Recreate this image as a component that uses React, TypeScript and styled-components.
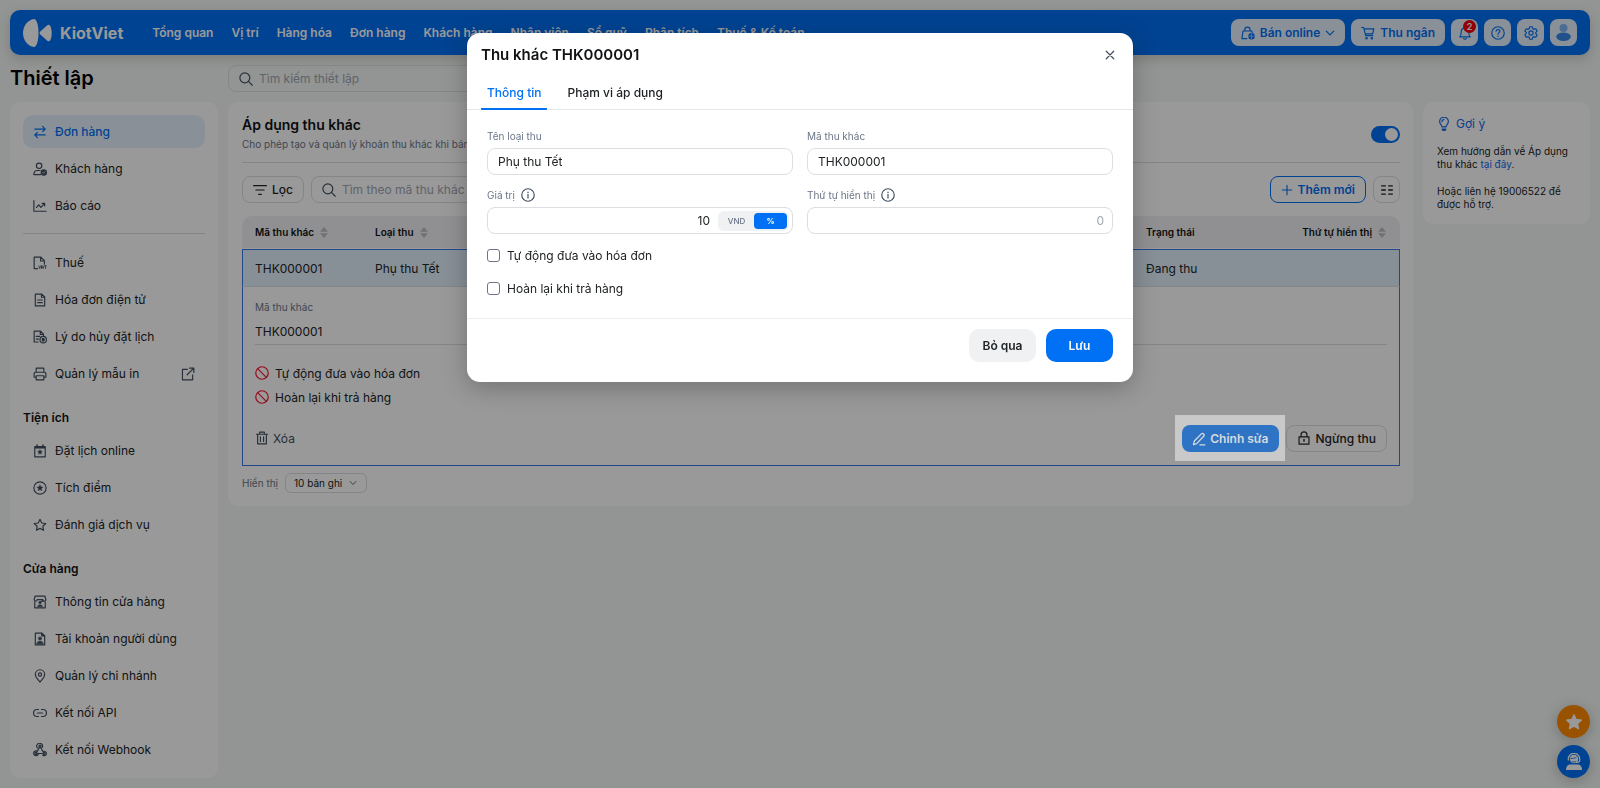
import React, { ReactNode, useState } from "react";
import styled, { createGlobalStyle, css } from "styled-components";

const c = {
  blue: "#0070f4",
  blueSoft: "#e6f1fe",
  ink: "#202325",
  icon: "#42505f",
  muted: "#6c7688",
  hint: "#a0a6b1",
  line: "#dcdee2",
  card: "#ffffff",
  page: "#f4f8f5",
};

const Global = createGlobalStyle`
  *, *::before, *::after { box-sizing: border-box; }
  body { margin: 0; background: ${c.page}; }
  body, button, input, select { font-family: Inter, "Liberation Sans", sans-serif; font-size: 12px; color: ${c.ink}; }
  a { color: inherit; text-decoration: none; }
  button { cursor: pointer; }
  h1, h2, h3, p { margin: 0; }
  svg { display: block; flex: none; }
`;

/* ---------- icons ---------- */

const Svg = ({ size = 14, w = 2, children }: { size?: number; w?: number; children: ReactNode }) => (
  <svg width={size} height={size} viewBox="0 0 24 24" fill="none" stroke="currentColor" strokeWidth={w} strokeLinecap="round" strokeLinejoin="round" aria-hidden="true">
    {children}
  </svg>
);

const star = "M12 2.2l3 6.3 6.9.9-5 4.8 1.2 6.9L12 17.8l-6.1 3.3 1.2-6.9-5-4.8 6.9-.9z";

const icons: Record<string, ReactNode> = {
  swap: <><path d="M3 7h18M16.500 2.500L21 7l-4.500 4.500M21 17H3M7.500 12.500L3 17l4.500 4.500" /></>,
  customer: <><circle cx="10.500" cy="6.500" r="4.700" /><path d="M13 21.500H1.500c0-4.500 2.500-7 6-7h4.500" /><circle cx="18.500" cy="18" r="4.500" fill="currentColor" /><path d="M16.500 18l1.500 1.500 2.500-3" stroke="#fff" strokeWidth="1.200" /></>,
  report: <><path d="M1.500 2.500v18.500h21" /><path d="M6 14.500l4-4.500 3.500 4.500 6.500-7M15.500 7.500H20V12" /></>,
  tax: <><path d="M8 21.500H2V2h11.500l6 6v6M13 2v6.500h6.500" /><path d="M10 17l1.500 4.500L13 17M14.500 21.500v-4.500h3v4.500M14.500 19.500h3M19.500 17H23M21.300 17v4.500" strokeWidth="1.400" /></>,
  invoice: <><path d="M4 1.800h11l5 5v15.400H4zM14.500 1.800v5.500H20M8 12h8M8 16.500h8" /></>,
  cancelDoc: <><path d="M9 20.500H2V2h11l5 5v3M12.500 2v5.500H18M5.500 11h6M5.500 15.500h4" /><circle cx="17.500" cy="16.500" r="5.500" /><path d="M16 14.500h3v4h-3z" fill="currentColor" /></>,
  print: <><path d="M5.500 9V2h13v7M5.500 17.500H2V11c0-1 .8-2 2-2h16c1.200 0 2 1 2 2v6.500h-3.500M5.500 15h13v7h-13z" /></>,
  external: <><path d="M11 4H2.500v18H20v-8.500M14.500 1.800H22V9.300M22 1.800L10.500 13.300" /></>,
  calendar: <><path d="M3 4.500h18V22H3zM3 6.500h18" /><path d="M7 1.500V6M17 1.500V6" strokeWidth="2.500" /><path d="M12 9.500l1.300 2.700 3 .4-2.200 2.100.5 3-2.600-1.400-2.600 1.400.5-3-2.200-2.100 3-.4z" fill="currentColor" strokeWidth=".5" /></>,
  points: <><circle cx="12" cy="12" r="10.500" /><path d="M12 6.500l1.700 3.400 3.800.5-2.800 2.600.7 3.700L12 14.900l-3.400 1.800.7-3.700-2.800-2.600 3.800-.5z" fill="currentColor" strokeWidth=".5" /></>,
  star: <path d={star} />,
  shop: <><path d="M3 10v12h18V10M2 8l1.500-6h17L22 8c0 1.500-1 2.500-2.500 2.500S17 9.500 17 8c0 1.500-1 2.500-2.500 2.500M7 8c0 1.500-1 2.500-2.500 2.500S2 9.500 2 8M7 8h10" /><circle cx="12" cy="13" r="2.300" fill="currentColor" strokeWidth=".5" /><path d="M7.500 20c.3-2.300 2-3.300 4.500-3.300s4.200 1 4.500 3.300z" fill="currentColor" strokeWidth=".5" /></>,
  account: <><path d="M4 1.800h11l5 5v15.400H4z" /><path d="M15 1.800v5h5z" fill="currentColor" /><circle cx="12" cy="11" r="2.600" fill="currentColor" strokeWidth="1" /><path d="M6.500 20c.5-3 2.500-4.300 5.500-4.300s5 1.300 5.500 4.300z" fill="currentColor" strokeWidth="1" /></>,
  pin: <><path d="M12 22.700C7.500 17 4 13.500 4 9.300a8 8 0 0116 0c0 4.200-3.500 7.700-8 13.400z" /><circle cx="12" cy="9.300" r="2.800" /></>,
  link: <><path d="M9.500 6H7a6 6 0 000 12h2.500M14.500 6h2.500a6 6 0 010 12h-2.500M7.500 12h9" /></>,
  webhook: <><circle cx="12" cy="5.500" r="1.800" /><circle cx="5" cy="18" r="1.800" /><circle cx="19" cy="18" r="1.800" /><path d="M7.500 8.500a5 5 0 118.500-1M11 7.500L6.500 16M13 7.500l4 7c3.500-1.200 6 1 6 3.500 0 3-3.500 5-6.500 3M7 18h10M6.500 13.500C3 13 1 15.500 1 18c0 4 6.500 5.500 8.500 1" /></>,
  search: <><circle cx="10" cy="10" r="8.500" /><path d="M16.200 16.200l6.500 6.500" /></>,
  filter: <path d="M1 4.500h22M5 12h14M9.800 19.500h4.400" />,
  info: <><circle cx="12" cy="12" r="10.700" /><path d="M12 11v6" /><path d="M12 7.200v.3" strokeWidth="2.300" /></>,
  ban: <><circle cx="12" cy="12" r="10.700" /><path d="M4.600 4.600l14.800 14.800" /></>,
  trash: <><path d="M2.500 5.500h19M8 5.500V2h8v3.500M4.500 5.500V22h15V5.500M9.300 10v8M14.700 10v8" /></>,
  edit: <><path d="M2.500 21.500l1.500-6L16 3.200c2.500-2.400 6.300 1.500 4 4L8 20zM13.500 22H22" /></>,
  lock: <><path d="M3.500 10h17v12.500h-17zM7 10V6.500a5 5 0 0110 0V10" /><path d="M12 14.500v3" strokeWidth="2.400" /></>,
  plus: <path d="M12 2.500v19M2.500 12h19" />,
  columns: <path d="M2 5h8M14 5h8M2 12h8M14 12h8M2 19h8M14 19h8" strokeLinecap="butt" />,
  chevron: <path d="M3 7.500l9 9 9-9" />,
  close: <path d="M3 3l18 18M21 3L3 21" />,
  bag: <><path d="M10 21.500H1.500L3.500 8.500h15l.7 3M6.500 8V6.500a4.500 4.500 0 019 0V8" /><circle cx="18" cy="17.500" r="5.500" fill="currentColor" stroke="none" /><path d="M13.500 17.500h9M18 13v9" stroke="#e6f1fe" strokeWidth="1" /></>,
  cart: <><path d="M1 2.500h3.500L8 16.500h12M5 5h17l-2 8.500H7.500" /><circle cx="9.500" cy="21" r="1.300" /><circle cx="18.500" cy="21" r="1.300" /></>,
  bell: <><path d="M3 18.500h18c-2-2-2.500-4-2.500-8.500 0-4-3-6.500-6.500-6.500S5.500 6 5.500 10c0 4.500-.5 6.500-2.500 8.500zM12 3.500v-2M9.500 21.700c1.200 1.200 3.800 1.200 5 0" /></>,
  help: <><circle cx="12" cy="12" r="10.700" /><path d="M8.700 9c.2-1.800 1.500-2.800 3.300-2.800s3.400 1 3.400 2.800c0 2.500-3.400 2.300-3.400 5" /><path d="M12 17.300v.2" strokeWidth="2.400" /></>,
  gear: <><path d="M9.700 1.300h4.600l.7 3.200 2 1.200 3.200-1 2.300 4-2.300 2.300v2l2.300 2.300-2.300 4-3.200-1-2 1.200-.7 3.200H9.700l-.7-3.200-2-1.200-3.200 1-2.300-4L3.800 13v-2L1.500 8.700l2.300-4 3.200 1 2-1.200z" /><circle cx="12" cy="12" r="3.600" /></>,
  bulb: <><path d="M8.500 17c0-3.500-4-4.500-4-9.200a7.500 7.500 0 0115 0c0 4.700-4 5.700-4 9.200zM8.500 8c0-2 1.300-3.500 3.500-3.500" /><path d="M9 20.500h6v1.500l-3 1-3-1z" fill="currentColor" /></>,
};

const Icon = ({ name, size, w }: { name: string; size?: number; w?: number }) => (
  <Svg size={size} w={w}>{icons[name]}</Svg>
);

/* ---------- page shell ---------- */

const Page = styled.div`
  display: flex;
  flex-direction: column;
  gap: 10px;
  padding: 10px;
`;

const TopBar = styled.header`
  display: flex;
  align-items: center;
  height: 45px;
  padding: 0 13px;
  border-radius: 10px;
  background: ${c.blue};
  color: #fff;
  box-shadow: 0 4px 12px rgba(0, 0, 0, 0.16);
`;

const Brand = styled.a`
  display: flex;
  align-items: center;
  gap: 8px;
  margin-right: 20px;
  font-size: 16px;
  font-weight: 700;
`;

const Nav = styled.nav`
  display: flex;
  flex: 1;
`;

const NavLink = styled.a`
  padding: 0 9px;
  font-weight: 600;
  line-height: 20px;
  white-space: nowrap;
`;

const TopActions = styled.div`
  display: flex;
  gap: 6px;
`;

const TopButton = styled.button<{ $square?: boolean }>`
  position: relative;
  display: flex;
  align-items: center;
  justify-content: center;
  gap: 5px;
  height: 27px;
  padding: ${(p) => (p.$square ? "0" : "0 10px")};
  width: ${(p) => (p.$square ? "27px" : "auto")};
  border: 0;
  border-radius: 8px;
  background: ${c.blueSoft};
  color: ${c.blue};
  font-weight: 600;
`;

const Badge = styled.span`
  position: absolute;
  top: 1px;
  right: 2px;
  width: 13px;
  height: 13px;
  border-radius: 50%;
  background: #f00008;
  color: #fff;
  font-size: 9px;
  line-height: 13px;
  text-align: center;
`;

const TitleRow = styled.div`
  display: grid;
  grid-template-columns: 208px minmax(0, 1fr);
  column-gap: 10px;
  align-items: center;
`;

const PageTitle = styled.h1`
  font-size: 20px;
  line-height: 27px;
  font-weight: 600;
  color: #000;
`;

const SearchField = styled.label<{ $width: number }>`
  display: flex;
  align-items: center;
  gap: 6px;
  width: ${(p) => p.$width}px;
  height: 27px;
  padding: 0 10px;
  border: 1px solid ${c.line};
  border-radius: 8px;
  color: ${c.icon};

  input {
    flex: 1;
    min-width: 0;
    padding: 0;
    border: 0;
    outline: 0;
    background: transparent;
  }
  input::placeholder { color: ${c.hint}; opacity: 1; }
`;

const Columns = styled.div`
  display: grid;
  grid-template-columns: 208px minmax(0, 1fr) 167px;
  gap: 10px;
  align-items: start;
`;

const Card = styled.section`
  border-radius: 10px;
  background: ${c.card};
`;

/* ---------- sidebar ---------- */

const Sidebar = styled(Card).attrs({ as: "aside" })`
  padding: 13px 13px 12px;
`;

const MenuGroup = styled.nav`
  display: flex;
  flex-direction: column;
  gap: 4px;

  & + & {
    margin-top: 11px;
    padding-top: 12px;
    border-top: 1px solid ${c.line};
  }
`;

const MenuTitle = styled.h2`
  margin: 18px 0 6px;
  font-size: 12px;
  line-height: 20px;
  font-weight: 600;
  color: #101214;
`;

const MenuItem = styled.a<{ $active?: boolean }>`
  display: flex;
  align-items: center;
  gap: 8px;
  height: 33px;
  padding: 0 10px;
  border-radius: 10px;
  color: ${c.ink};

  svg { color: ${c.icon}; }
  span { flex: 1; }

  ${(p) => p.$active && css`
    background: ${c.blueSoft};
    color: ${c.blue};
    font-weight: 500;
    svg { color: ${c.blue}; }
  `}
`;

/* ---------- main panel ---------- */

const Main = styled(Card).attrs({ as: "main" })`
  padding: 13px 13px 13px 14px;
`;

const PanelHead = styled.div`
  display: flex;
  align-items: center;
  justify-content: space-between;
  height: 48px;
  padding-bottom: 9px;
  border-bottom: 1px solid ${c.line};
`;

const PanelTitle = styled.h2`
  font-size: 14px;
  line-height: 20px;
  font-weight: 600;
  color: #101214;
`;

const PanelNote = styled.p`
  font-size: 10px;
  line-height: 18px;
  color: ${c.muted};
`;

const Switch = styled.input.attrs({ type: "checkbox" })`
  appearance: none;
  display: flex;
  align-items: center;
  width: 29px;
  height: 17px;
  margin: 0;
  padding: 2px;
  border-radius: 9px;
  background: #b9bec6;

  &::before {
    content: "";
    width: 13px;
    height: 13px;
    border-radius: 50%;
    background: #fff;
  }
  &:checked {
    justify-content: flex-end;
    background: ${c.blue};
  }
`;

const Toolbar = styled.div`
  display: flex;
  gap: 7px;
  margin: 13px 0;
`;

const Spacer = styled.div`
  flex: 1;
`;

const OutlineButton = styled.button<{ $blue?: boolean; $square?: boolean }>`
  display: flex;
  align-items: center;
  justify-content: center;
  gap: 5px;
  width: ${(p) => (p.$square ? "27px" : "auto")};
  height: 27px;
  padding: ${(p) => (p.$square ? "0" : "0 10px")};
  border: 1px solid ${(p) => (p.$blue ? c.blue : c.line)};
  border-radius: 8px;
  background: #fff;
  color: ${(p) => (p.$blue ? c.blue : c.ink)};
  font-weight: ${(p) => (p.$blue ? 600 : 500)};
`;

const Table = styled.table`
  width: 100%;
  border-collapse: separate;
  border-spacing: 0;
  table-layout: fixed;
  text-align: left;

  th {
    height: 33px;
    padding: 0 14px 0 13px;
    background: #f0f1f3;
    border-bottom: 1px solid #fff;
    font-size: 10px;
    font-weight: 600;
    color: #101214;
  }
  th:first-child { border-radius: 10px 0 0 0; }
  th:last-child { border-radius: 0 10px 0 0; }
`;

const SelectedRow = styled.tr`
  td {
    height: 38px;
    padding: 0 12px;
    border-top: 1px solid #3a78e8;
    border-bottom: 1px solid ${c.line};
    background: #e2effc;
  }
  td:first-child { border-left: 1px solid #3a78e8; }
  td:last-child { border-right: 1px solid #3a78e8; }
  td + td { padding-left: 13px; }
`;

const DetailCell = styled.td`
  padding: 11px 12px 4px;
  border: 1px solid #3a78e8;
  border-top: 0;
`;

const Sortable = styled.button<{ $end?: boolean }>`
  display: flex;
  align-items: center;
  justify-content: ${(p) => (p.$end ? "flex-end" : "flex-start")};
  gap: 6px;
  width: 100%;
  padding: 0;
  border: 0;
  background: none;
  font-size: 10px;
  font-weight: 600;
  color: inherit;
  white-space: nowrap;
`;

const ReadLabel = styled.div`
  font-size: 10px;
  line-height: 18px;
  color: ${c.muted};
`;

const ReadValue = styled.div`
  height: 29px;
  margin-bottom: 16px;
  padding-top: 7px;
  line-height: 18px;
  border-bottom: 1px solid ${c.line};
`;

const Flag = styled.div`
  display: flex;
  align-items: center;
  gap: 6px;
  height: 24px;

  svg { color: #ff0a24; }
`;

const DetailActions = styled.div`
  display: flex;
  align-items: center;
  margin-top: 6px;
`;

const TextButton = styled.button`
  display: flex;
  align-items: center;
  gap: 4px;
  padding: 0;
  border: 0;
  background: none;
  color: ${c.icon};
`;

const Spotlight = styled.div`
  position: relative;
  z-index: 6;
  margin-left: auto;
  margin-right: 1px;
  padding: 10px 6px 9px 7px;
  background: #c9c9c9;
`;

const EditButton = styled.button`
  display: flex;
  align-items: center;
  gap: 4px;
  height: 27px;
  padding: 0 10px;
  border: 0;
  border-radius: 8px;
  background: #2f74c4;
  color: #d6dade;
  font-weight: 600;
`;

const Pager = styled.div`
  display: flex;
  align-items: center;
  gap: 7px;
  margin-top: 7px;
  font-size: 10px;
  color: ${c.muted};
`;

const SelectWrap = styled.div`
  display: grid;
  align-items: center;
  height: 20px;
  border: 1px solid ${c.line};
  border-radius: 6px;
  color: ${c.icon};

  > * { grid-area: 1 / 1; }
  svg { justify-self: end; margin-right: 9px; pointer-events: none; }
  select {
    appearance: none;
    height: 18px;
    padding: 0 21px 0 8px;
    border: 0;
    background: none;
    font-size: 10px;
    outline: 0;
  }
`;

/* ---------- tips ---------- */

const Tips = styled(Card).attrs({ as: "aside" })`
  display: flex;
  flex-direction: column;
  gap: 14px;
  padding: 14px 13px 13px 14px;

  h2 {
    display: flex;
    align-items: center;
    gap: 5px;
    font-size: 12px;
    line-height: 15px;
    font-weight: 400;
    color: #1468e8;
  }
  p { font-size: 10px; line-height: 13px; white-space: nowrap; }
  p a { color: #1468e8; }
`;

const Floating = styled.div`
  position: fixed;
  right: 10px;
  bottom: 10px;
  display: flex;
  flex-direction: column;
  gap: 7px;
`;

const Fab = styled.button<{ $color: string }>`
  display: grid;
  place-items: center;
  width: 33px;
  height: 33px;
  padding: 0;
  border: 0;
  border-radius: 50%;
  background: ${(p) => p.$color};
  color: #fff;
  box-shadow: 0 3px 14px rgba(0, 0, 0, 0.22);
`;

/* ---------- dialog ---------- */

const Backdrop = styled.div`
  position: fixed;
  inset: 0;
  z-index: 5;
  background: rgba(0, 0, 0, 0.4);
`;

const DialogLayer = styled.div`
  position: fixed;
  inset: 0;
  z-index: 7;
  display: flex;
  align-items: flex-start;
  justify-content: center;
  padding-top: 33px;
  pointer-events: none;
`;

const Dialog = styled.form`
  width: 100%;
  max-width: 666px;
  border-radius: 13px;
  background: #fff;
  box-shadow: 0 6px 24px rgba(0, 0, 0, 0.25);
  pointer-events: auto;
`;

const DialogHead = styled.div`
  display: flex;
  align-items: center;
  justify-content: space-between;
  height: 43px;
  padding: 0 14px;

  h2 {
    font-size: 15px;
    font-weight: 600;
    color: #101214;
  }
`;

const CloseButton = styled.button`
  display: grid;
  place-items: center;
  width: 18px;
  height: 18px;
  padding: 0;
  border: 0;
  background: none;
  color: #42505f;
`;

const Tabs = styled.div`
  display: flex;
  gap: 14px;
  padding: 0 14px;
  border-bottom: 1px solid #e4e6e9;
`;

const Tab = styled.button<{ $active?: boolean }>`
  height: 34px;
  margin-bottom: -1px;
  padding: 0 6px;
  border: 0;
  border-bottom: 2px solid ${(p) => (p.$active ? c.blue : "transparent")};
  border-radius: 1px;
  background: none;
  color: ${(p) => (p.$active ? c.blue : c.ink)};
  font-weight: 500;
`;

const Fields = styled.div`
  display: grid;
  grid-template-columns: 1fr 1fr;
  gap: 13px 14px;
  padding: 19px 20px 0;
`;

const Field = styled.div`
  display: flex;
  flex-direction: column;
  gap: 5px;
`;

const FieldLabel = styled.label`
  display: flex;
  align-items: center;
  gap: 6px;
  height: 14px;
  font-size: 10px;
  color: ${c.muted};

  svg { color: ${c.icon}; }
`;

const InputBox = styled.div`
  display: flex;
  align-items: center;
  height: 27px;
  border: 1px solid ${c.line};
  border-radius: 8px;
`;

const Input = styled.input<{ $end?: boolean }>`
  flex: 1;
  min-width: 0;
  height: 25px;
  padding: 0 ${(p) => (p.$end ? "8px" : "10px")} 0 10px;
  border: 0;
  outline: 0;
  background: none;
  text-align: ${(p) => (p.$end ? "right" : "left")};

  &::placeholder { color: ${c.hint}; opacity: 1; }
`;

const Units = styled.div`
  display: flex;
  gap: 1px;
  height: 20px;
  margin-right: 3px;
  padding: 2px;
  border-radius: 6px;
  background: #f0f1f3;
`;

const Unit = styled.button<{ $active?: boolean }>`
  width: 33px;
  padding: 0;
  border: 0;
  border-radius: 4px;
  background: ${(p) => (p.$active ? c.blue : "transparent")};
  color: ${(p) => (p.$active ? "#fff" : c.muted)};
  font-size: 8px;
  font-weight: ${(p) => (p.$active ? 700 : 500)};
`;

const Checks = styled.div`
  display: flex;
  flex-direction: column;
  gap: 13px;
  padding: 11px 20px 20px;
`;

const Check = styled.label`
  display: flex;
  align-items: center;
  gap: 7px;
  height: 20px;

  input {
    appearance: none;
    width: 13px;
    height: 13px;
    margin: 0;
    border: 1px solid #6c7688;
    border-radius: 3px;
  }
  input:checked { background: ${c.blue}; }
`;

const DialogFoot = styled.div`
  display: flex;
  justify-content: flex-end;
  gap: 10px;
  padding: 10px 20px 20px;
  border-top: 1px solid #eceef0;
`;

const FootButton = styled.button<{ $primary?: boolean }>`
  width: 67px;
  height: 33px;
  border: 0;
  border-radius: 10px;
  background: ${(p) => (p.$primary ? c.blue : "#f0f1f3")};
  color: ${(p) => (p.$primary ? "#fff" : c.ink)};
  font-weight: 600;
`;

const Logo = () => (
  <svg width="29" height="28" viewBox="0 0 29 28" fill="#fff" aria-hidden="true">
    <path d="M11 0c2.500 0 4.500 6 4.500 14S13.500 28 11 28C4.500 27 0 21 0 14S4.500 1 11 0z" />
    <path d="M17.300 12.500l7-6.200c1.200-1 2.200-.8 2.900.4 2 4 2 10.600 0 14.600-.7 1.200-1.700 1.400-2.900.4l-7-6.200c-1-1-1-2 0-3z" />
  </svg>
);

const Avatar = () => (
  <svg width="15" height="17" viewBox="0 0 15 17" aria-hidden="true">
    <circle cx="7.500" cy="4" r="4" fill="#7fb4f5" />
    <ellipse cx="7.500" cy="12.800" rx="7.300" ry="4.200" fill="#3787e8" />
  </svg>
);

const SortMark = () => (
  <svg width="8" height="11" viewBox="0 0 8 11" fill="#b9bdc4" aria-hidden="true">
    <path d="M4 0l4 4.700H0zM4 11l4-4.700H0z" />
  </svg>
);

const Agent = () => (
  <svg width="16" height="17" viewBox="0 0 16 17" aria-hidden="true">
    <circle cx="8" cy="6" r="4.200" fill="#fff" />
    <path d="M2.300 7.500V6a5.700 5.700 0 0111.400 0v1.500c0 1.500-1.500 2-4.200 2" fill="none" stroke="#fff" strokeWidth="1.200" />
    <path d="M4.500 5.500c2 0 5-.3 6-1.500M6 8.500c1.300.8 2.700.8 4 0" stroke={c.blue} strokeWidth=".8" fill="none" />
    <path d="M0 17c0-3.500 1.500-5.500 5-5.500h6c3.500 0 5 2 5 5.500z" fill="#fff" />
  </svg>
);

/* ---------- data ---------- */

const navItems = ["Tổng quan", "Vị trí", "Hàng hóa", "Đơn hàng", "Khách hàng", "Nhân viên", "Sổ quỹ", "Phân tích", "Thuế & Kế toán"];

type Item = { icon: string; label: string; external?: boolean };

const orderMenu: Item[] = [
  { icon: "swap", label: "Đơn hàng" },
  { icon: "customer", label: "Khách hàng" },
  { icon: "report", label: "Báo cáo" },
];
const docMenu: Item[] = [
  { icon: "tax", label: "Thuế" },
  { icon: "invoice", label: "Hóa đơn điện tử" },
  { icon: "cancelDoc", label: "Lý do hủy đặt lịch" },
  { icon: "print", label: "Quản lý mẫu in", external: true },
];
const utilityMenu: Item[] = [
  { icon: "calendar", label: "Đặt lịch online" },
  { icon: "points", label: "Tích điểm" },
  { icon: "star", label: "Đánh giá dịch vụ" },
];
const shopMenu: Item[] = [
  { icon: "shop", label: "Thông tin cửa hàng" },
  { icon: "account", label: "Tài khoản người dùng" },
  { icon: "pin", label: "Quản lý chi nhánh" },
  { icon: "link", label: "Kết nối API" },
  { icon: "webhook", label: "Kết nối Webhook" },
];

const Menu = ({ items, active }: { items: Item[]; active?: string }) => (
  <MenuGroup>
    {items.map((item) => (
      <MenuItem key={item.label} href="#" $active={item.label === active}>
        <Icon name={item.icon} />
        <span>{item.label}</span>
        {item.external && <Icon name="external" />}
      </MenuItem>
    ))}
  </MenuGroup>
);

const SurchargeDialog = () => {
  const [unit, setUnit] = useState("%");
  return (
    <DialogLayer>
      <Dialog role="dialog" aria-labelledby="dialog-title" onSubmit={(e) => e.preventDefault()}>
        <DialogHead>
          <h2 id="dialog-title">Thu khác THK000001</h2>
          <CloseButton type="button" aria-label="Đóng"><Icon name="close" size={10} w={3} /></CloseButton>
        </DialogHead>
        <Tabs role="tablist">
          <Tab type="button" role="tab" aria-selected $active>Thông tin</Tab>
          <Tab type="button" role="tab" aria-selected={false}>Phạm vi áp dụng</Tab>
        </Tabs>
        <Fields>
          <Field>
            <FieldLabel htmlFor="name">Tên loại thu</FieldLabel>
            <InputBox><Input id="name" defaultValue="Phụ thu Tết" /></InputBox>
          </Field>
          <Field>
            <FieldLabel htmlFor="code">Mã thu khác</FieldLabel>
            <InputBox><Input id="code" defaultValue="THK000001" /></InputBox>
          </Field>
          <Field>
            <FieldLabel htmlFor="value">Giá trị <Icon name="info" /></FieldLabel>
            <InputBox>
              <Input id="value" $end defaultValue="10" />
              <Units>
                {["VND", "%"].map((u) => (
                  <Unit key={u} type="button" $active={u === unit} onClick={() => setUnit(u)}>{u}</Unit>
                ))}
              </Units>
            </InputBox>
          </Field>
          <Field>
            <FieldLabel htmlFor="order">Thứ tự hiển thị <Icon name="info" /></FieldLabel>
            <InputBox><Input id="order" $end placeholder="0" /></InputBox>
          </Field>
        </Fields>
        <Checks>
          <Check><input type="checkbox" />Tự động đưa vào hóa đơn</Check>
          <Check><input type="checkbox" />Hoàn lại khi trả hàng</Check>
        </Checks>
        <DialogFoot>
          <FootButton type="button">Bỏ qua</FootButton>
          <FootButton type="submit" $primary>Lưu</FootButton>
        </DialogFoot>
      </Dialog>
    </DialogLayer>
  );
};

export default function App() {
  return (
    <>
      <Global />
      <Page>
        <TopBar>
          <Brand href="#"><Logo />KiotViet</Brand>
          <Nav>
            {navItems.map((label) => <NavLink key={label} href="#">{label}</NavLink>)}
          </Nav>
          <TopActions>
            <TopButton><Icon name="bag" />Bán online<Icon name="chevron" size={10} w={3} /></TopButton>
            <TopButton><Icon name="cart" />Thu ngân</TopButton>
            <TopButton $square aria-label="Thông báo"><Icon name="bell" /><Badge>2</Badge></TopButton>
            <TopButton $square aria-label="Trợ giúp"><Icon name="help" /></TopButton>
            <TopButton $square aria-label="Cài đặt"><Icon name="gear" /></TopButton>
            <TopButton $square aria-label="Tài khoản"><Avatar /></TopButton>
          </TopActions>
        </TopBar>

        <TitleRow>
          <PageTitle>Thiết lập</PageTitle>
          <SearchField $width={400}>
            <Icon name="search" />
            <input placeholder="Tìm kiếm thiết lập" aria-label="Tìm kiếm thiết lập" />
          </SearchField>
        </TitleRow>

        <Columns>
          <Sidebar>
            <Menu items={orderMenu} active="Đơn hàng" />
            <Menu items={docMenu} />
            <MenuTitle>Tiện ích</MenuTitle>
            <Menu items={utilityMenu} />
            <MenuTitle>Cửa hàng</MenuTitle>
            <Menu items={shopMenu} />
          </Sidebar>

          <Main>
            <PanelHead>
              <div>
                <PanelTitle>Áp dụng thu khác</PanelTitle>
                <PanelNote>Cho phép tạo và quản lý khoản thu khác khi bán</PanelNote>
              </div>
              <Switch defaultChecked aria-label="Áp dụng thu khác" />
            </PanelHead>

            <Toolbar>
              <OutlineButton><Icon name="filter" w={2} />Lọc</OutlineButton>
              <SearchField $width={320}>
                <Icon name="search" />
                <input placeholder="Tìm theo mã thu khác" aria-label="Tìm theo mã thu khác" />
              </SearchField>
              <Spacer />
              <OutlineButton $blue><Icon name="plus" size={12} w={2.2} />Thêm mới</OutlineButton>
              <OutlineButton $square aria-label="Tùy chọn cột"><Icon name="columns" w={2.2} /></OutlineButton>
            </Toolbar>

            <Table>
              <colgroup>
                <col width="120" />
                <col />
                <col width="130" />
                <col width="137" />
              </colgroup>
              <thead>
                <tr>
                  <th><Sortable>Mã thu khác<SortMark /></Sortable></th>
                  <th><Sortable>Loại thu<SortMark /></Sortable></th>
                  <th>Trạng thái</th>
                  <th><Sortable $end>Thứ tự hiển thị<SortMark /></Sortable></th>
                </tr>
              </thead>
              <tbody>
                <SelectedRow>
                  <td>THK000001</td>
                  <td>Phụ thu Tết</td>
                  <td>Đang thu</td>
                  <td />
                </SelectedRow>
                <tr>
                  <DetailCell colSpan={4}>
                    <ReadLabel>Mã thu khác</ReadLabel>
                    <ReadValue>THK000001</ReadValue>
                    <Flag><Icon name="ban" />Tự động đưa vào hóa đơn</Flag>
                    <Flag><Icon name="ban" />Hoàn lại khi trả hàng</Flag>
                    <DetailActions>
                      <TextButton><Icon name="trash" />Xóa</TextButton>
                      <Spotlight>
                        <EditButton><Icon name="edit" w={2.2} />Chỉnh sửa</EditButton>
                      </Spotlight>
                      <OutlineButton><Icon name="lock" />Ngừng thu</OutlineButton>
                    </DetailActions>
                  </DetailCell>
                </tr>
              </tbody>
            </Table>

            <Pager>
              <label htmlFor="page-size">Hiển thị</label>
              <SelectWrap>
                <select id="page-size">
                  <option>10 bản ghi</option>
                  <option>20 bản ghi</option>
                </select>
                <Icon name="chevron" size={8} w={2.6} />
              </SelectWrap>
            </Pager>
          </Main>

          <Tips>
            <h2><Icon name="bulb" />Gợi ý</h2>
            <p>Xem hướng dẫn về Áp dụng<br />thu khác <a href="#">tại đây</a>.</p>
            <p>Hoặc liên hệ 19006522 để<br />được hỗ trợ.</p>
          </Tips>
        </Columns>

        <Floating>
          <Fab $color="#ff8a00" aria-label="Yêu thích">
            <svg width="18" height="18" viewBox="0 0 24 24" fill="currentColor" stroke="currentColor" strokeWidth="1.500" strokeLinejoin="round" aria-hidden="true"><path d={star} /></svg>
          </Fab>
          <Fab $color={c.blue} aria-label="Hỗ trợ"><Agent /></Fab>
        </Floating>
      </Page>
      <Backdrop />
      <SurchargeDialog />
    </>
  );
}
